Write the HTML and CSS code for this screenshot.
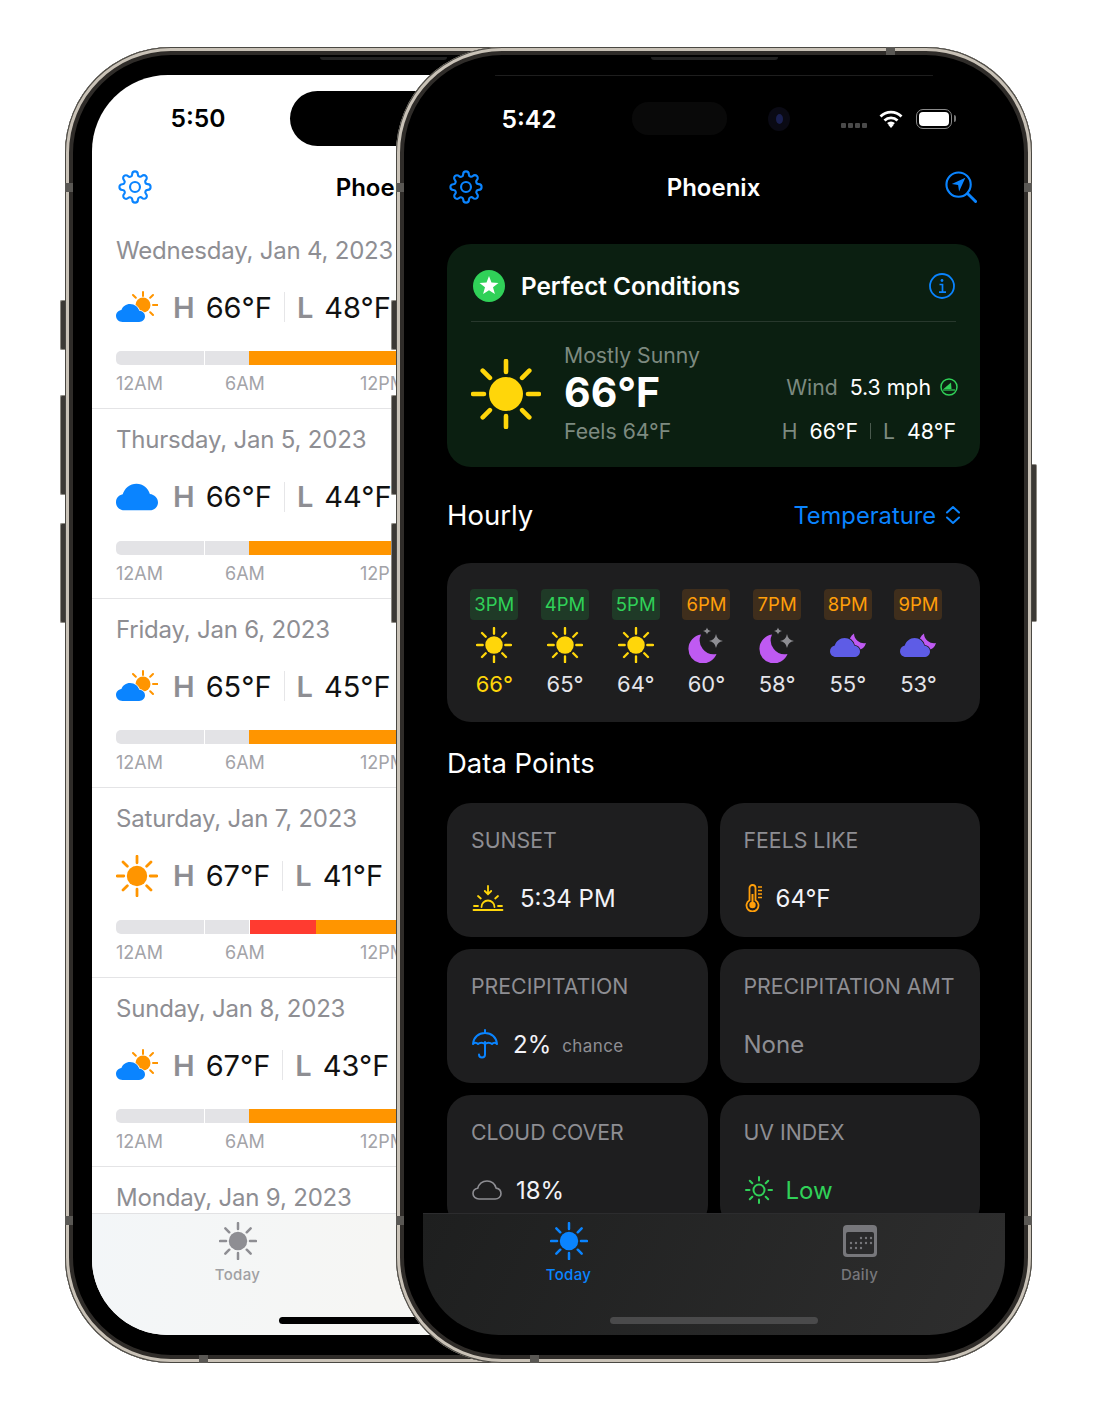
FILE: index.html
```html
<!DOCTYPE html>
<html lang="en">
<head>
    <meta charset="UTF-8">
    <meta name="viewport" content="width=device-width, initial-scale=1.0">
    <title>Phoenix weather</title>
    <link rel="stylesheet" href="styles.css">
</head>
<body>

    <!-- Icon set -->
    <svg class="sprite" xmlns="http://www.w3.org/2000/svg">
        <symbol id="sun" viewBox="0 0 70 70">
            <circle cx="35" cy="35" r="17" fill="currentColor"/>
            <path d="M35 2v11M35 57v11M2 35h11M57 35h11M11.700 11.700l7.200 7.200M51.100 51.100l7.200 7.200M11.700 58.300l7.200-7.200M51.100 18.900l7.200-7.200" stroke="currentColor" stroke-width="4.600" stroke-linecap="round" fill="none"/>
        </symbol>
        <symbol id="gear" viewBox="0 0 24 24">
            <g fill="none" stroke="currentColor" stroke-width="1.500" stroke-linejoin="round">
                <circle cx="12" cy="12" r="3.500"/>
                <path d="M19.400 15a1.650 1.650 0 0 0 .33 1.820l.06.06a2 2 0 0 1 0 2.830 2 2 0 0 1-2.830 0l-.06-.06a1.650 1.650 0 0 0-1.820-.33 1.650 1.650 0 0 0-1 1.510V21a2 2 0 0 1-2 2 2 2 0 0 1-2-2v-.09A1.650 1.650 0 0 0 9 19.400a1.650 1.650 0 0 0-1.820.33l-.06.06a2 2 0 0 1-2.830 0 2 2 0 0 1 0-2.830l.06-.06a1.650 1.650 0 0 0 .33-1.820 1.650 1.650 0 0 0-1.510-1H3a2 2 0 0 1-2-2 2 2 0 0 1 2-2h.09A1.650 1.650 0 0 0 4.600 9a1.650 1.650 0 0 0-.33-1.820l-.06-.06a2 2 0 0 1 0-2.830 2 2 0 0 1 2.830 0l.06.06a1.650 1.650 0 0 0 1.820.33H9a1.650 1.650 0 0 0 1-1.510V3a2 2 0 0 1 2-2 2 2 0 0 1 2 2v.09a1.650 1.650 0 0 0 1 1.510 1.650 1.650 0 0 0 1.820-.33l.06-.06a2 2 0 0 1 2.830 0 2 2 0 0 1 0 2.830l-.06.06a1.650 1.650 0 0 0-.33 1.820V9a1.650 1.650 0 0 0 1.510 1H21a2 2 0 0 1 2 2 2 2 0 0 1-2 2h-.09a1.650 1.650 0 0 0-1.510 1z"/>
            </g>
        </symbol>
        <symbol id="locate" viewBox="0 0 34 34">
            <circle cx="14" cy="14" r="12.500" fill="none" stroke="currentColor" stroke-width="2.200"/>
            <path d="M23.500 23.500L31.500 31.500" stroke="currentColor" stroke-width="3" stroke-linecap="round"/>
            <path d="M21 7L7 13.500l6.500 1 1 6.500z" fill="currentColor"/>
        </symbol>
        <symbol id="cloud-sun" viewBox="0 0 42 32">
            <path d="M27 1v4M17 4l2.800 2.800M37 4l-2.800 2.800M37 14h4.500M37 24l-2.800-2.800" stroke="#ff9500" stroke-width="2" stroke-linecap="round"/>
            <circle cx="27" cy="14" r="7.500" fill="#ff9500"/>
            <path d="M6.500 31C2.900 31 0 28.200 0 24.800c0-3 2.300-5.500 5.400-5.900C6.700 15.500 10 13 14 13c4.700 0 8.300 3 9.300 6.800 3.200.2 5.700 2.400 5.700 5.500 0 3.200-2.600 5.700-5.900 5.700z" fill="#0a84ff" stroke="#fff" stroke-width="1.500" paint-order="stroke"/>
        </symbol>
        <symbol id="cloud" viewBox="0 0 30 19">
            <path d="M6 19C2.700 19 0 16.500 0 13.200c0-2.800 2-5 4.800-5.600C6 3.200 10 0 14.600 0c4.800 0 8.400 3.200 9.600 7.400 3.200.4 5.800 2.800 5.800 6 0 3.200-2.600 5.600-6 5.600z" fill="currentColor"/>
        </symbol>
        <symbol id="moon-stars" viewBox="0 0 36 36">
            <path d="M13 7.500A14.500 14.500 0 1 0 28.500 27A14 14 0 0 1 13 7.500z" fill="#bf5af2"/>
            <path d="M28 7q1 6 7 7-6 1-7 7-1-6-7-7 6-1 7-7zM19 .500q.6 3 4 3.500-3.400.5-4 3.500-.6-3-4-3.500 3.400-.5 4-3.500z" fill="#8e8e93"/>
        </symbol>
        <symbol id="moon-cloud" viewBox="0 0 36 36">
            <path d="M24 6.500a10 10 0 0 0 12 9.500a9.500 9.500 0 0 1-8 7a9 9 0 0 1-4-16.500z" fill="#bf5af2"/>
            <path d="M6 30C2.700 30 0 27.500 0 24.200c0-2.800 2-5 4.800-5.600C6 14.200 10 11 14.600 11c4.800 0 8.400 3.200 9.600 7.400 3.200.4 5.800 2.800 5.800 6 0 3.200-2.600 5.600-6 5.600z" fill="#5e5ce6" stroke="#1e1e1f" stroke-width="1.500" paint-order="stroke"/>
        </symbol>
        <symbol id="sunset" viewBox="0 0 32 26">
            <g fill="none" stroke="currentColor" stroke-width="1.800" stroke-linecap="round">
                <path d="M16 1v8M12.800 6l3.200 3.200L19.200 6M9.500 22a6.500 6.500 0 0 1 13 0M1.500 25h29M2 21h4M26 21h4M6 11l2.800 2.500M26 11l-2.800 2.500"/>
            </g>
        </symbol>
        <symbol id="thermo" viewBox="0 0 18 28">
            <path d="M4.500 4a3 3 0 0 1 6 0v12.300a6 6 0 1 1-6 0z" fill="none" stroke="currentColor" stroke-width="1.800"/>
            <circle cx="7.500" cy="21" r="3.200" fill="currentColor"/>
            <path d="M7.500 10v10" stroke="currentColor" stroke-width="2"/>
            <path d="M13 3h4M13 6.500h4M13 10h4M13 13.500h4" stroke="currentColor" stroke-width="1.400"/>
        </symbol>
        <symbol id="umbrella" viewBox="0 0 26 30">
            <g fill="none" stroke="currentColor" stroke-width="2" stroke-linecap="round" stroke-linejoin="round">
                <path d="M13 1v3M1 15C1.500 8.500 6.500 4 13 4s11.500 4.500 12 11c-1.500-1.800-3.500-1.800-5 0-1.800-1.800-5-1.800-7 0-2-1.800-5.200-1.800-7 0-1.500-1.800-3.500-1.800-5 0z"/>
                <path d="M13 13v12.500a3 3 0 0 1-6 0"/>
            </g>
        </symbol>
        <symbol id="cloud-line" viewBox="0 0 30 20">
            <path d="M7 19C3.600 19 1 16.600 1 13.600c0-2.700 2-4.900 4.700-5.300C7 4 10.600 1 15 1c4.600 0 8 3 9.100 7.100 2.800.5 4.900 2.800 4.900 5.600 0 3-2.600 5.300-5.800 5.300z" fill="none" stroke="currentColor" stroke-width="1.600"/>
        </symbol>
        <symbol id="sun-line" viewBox="0 0 28 28">
            <circle cx="14" cy="14" r="5.500" fill="none" stroke="currentColor" stroke-width="2"/>
            <path d="M14 1v3.500M14 23.500V27M1 14h3.500M23.500 14H27M4.800 4.800l2.500 2.500M20.700 20.700l2.500 2.500M4.800 23.200l2.500-2.500M20.700 7.300l2.500-2.500" stroke="currentColor" stroke-width="2" stroke-linecap="round"/>
        </symbol>
        <symbol id="calendar" viewBox="0 0 34 32">
            <rect x="0" y="0" width="34" height="32" rx="4" fill="currentColor"/>
            <rect x="3" y="7" width="28" height="22" rx="2" fill="#2a2a2b"/>
            <g fill="currentColor">
                <circle cx="18" cy="13" r="1.200"/><circle cx="23" cy="13" r="1.200"/><circle cx="28" cy="13" r="1.200"/>
                <circle cx="8" cy="18" r="1.200"/><circle cx="13" cy="18" r="1.200"/><circle cx="18" cy="18" r="1.200"/><circle cx="23" cy="18" r="1.200"/><circle cx="28" cy="18" r="1.200"/>
                <circle cx="8" cy="23" r="1.200"/><circle cx="13" cy="23" r="1.200"/><circle cx="18" cy="23" r="1.200"/>
            </g>
        </symbol>
    </svg>

    <div class="stage">

        <!-- Light phone, behind -->
        <div class="phone phone-back">
            <span class="side-btn btn-mute"></span>
            <span class="side-btn btn-up"></span>
            <span class="side-btn btn-down"></span>
            <span class="speaker"></span>
            <span class="band band-left"></span>
            <span class="band band-left-low"></span>
            <span class="band band-bottom"></span>

            <div class="screen screen-light">
                <div class="status">
                    <span class="time">5:50</span>
                    <span class="island island-back"></span>
                </div>

                <div class="nav">
                    <svg class="gear"><use href="#gear"/></svg>
                    <span class="title">Phoenix</span>
                    <svg class="locate"><use href="#locate"/></svg>
                </div>

                <div class="day-list">
                    <div class="day">
                        <div class="day-date">Wednesday, Jan 4, 2023</div>
                        <div class="day-temps">
                            <svg class="day-icon"><use href="#cloud-sun"/></svg>
                            <span class="hl">H</span><span class="deg">66°F</span>
                            <span class="sep"></span>
                            <span class="hl">L</span><span class="deg">48°F</span>
                        </div>
                        <div class="bar"><span class="seg-a"></span><span class="seg-b"></span><span class="seg-warm"></span></div>
                        <div class="bar-labels"><span>12AM</span><span>6AM</span><span>12PM</span></div>
                    </div>
                    <div class="day">
                        <div class="day-date">Thursday, Jan 5, 2023</div>
                        <div class="day-temps">
                            <svg class="day-icon day-cloud"><use href="#cloud"/></svg>
                            <span class="hl">H</span><span class="deg">66°F</span>
                            <span class="sep"></span>
                            <span class="hl">L</span><span class="deg">44°F</span>
                        </div>
                        <div class="bar"><span class="seg-a"></span><span class="seg-b"></span><span class="seg-warm"></span></div>
                        <div class="bar-labels"><span>12AM</span><span>6AM</span><span>12PM</span></div>
                    </div>
                    <div class="day">
                        <div class="day-date">Friday, Jan 6, 2023</div>
                        <div class="day-temps">
                            <svg class="day-icon"><use href="#cloud-sun"/></svg>
                            <span class="hl">H</span><span class="deg">65°F</span>
                            <span class="sep"></span>
                            <span class="hl">L</span><span class="deg">45°F</span>
                        </div>
                        <div class="bar"><span class="seg-a"></span><span class="seg-b"></span><span class="seg-warm"></span></div>
                        <div class="bar-labels"><span>12AM</span><span>6AM</span><span>12PM</span></div>
                    </div>
                    <div class="day">
                        <div class="day-date">Saturday, Jan 7, 2023</div>
                        <div class="day-temps">
                            <svg class="day-icon day-sun"><use href="#sun"/></svg>
                            <span class="hl">H</span><span class="deg">67°F</span>
                            <span class="sep"></span>
                            <span class="hl">L</span><span class="deg">41°F</span>
                        </div>
                        <div class="bar"><span class="seg-a"></span><span class="seg-b"></span><span class="seg-hot"></span><span class="seg-warm"></span></div>
                        <div class="bar-labels"><span>12AM</span><span>6AM</span><span>12PM</span></div>
                    </div>
                    <div class="day">
                        <div class="day-date">Sunday, Jan 8, 2023</div>
                        <div class="day-temps">
                            <svg class="day-icon"><use href="#cloud-sun"/></svg>
                            <span class="hl">H</span><span class="deg">67°F</span>
                            <span class="sep"></span>
                            <span class="hl">L</span><span class="deg">43°F</span>
                        </div>
                        <div class="bar"><span class="seg-a"></span><span class="seg-b"></span><span class="seg-warm"></span></div>
                        <div class="bar-labels"><span>12AM</span><span>6AM</span><span>12PM</span></div>
                    </div>
                    <div class="day">
                        <div class="day-date">Monday, Jan 9, 2023</div>
                    </div>
                </div>

                <div class="tabbar tabbar-light">
                    <div class="tabs">
                        <div class="tab">
                            <svg class="tab-icon"><use href="#sun"/></svg>
                            <span class="tab-label">Today</span>
                        </div>
                        <div class="tab">
                            <svg class="tab-icon tab-cal"><use href="#calendar"/></svg>
                            <span class="tab-label">Daily</span>
                        </div>
                    </div>
                    <div class="home-bar"></div>
                </div>
            </div>
        </div>

        <!-- Dark phone, in front -->
        <div class="phone phone-front">
            <span class="side-btn btn-mute"></span>
            <span class="side-btn btn-up"></span>
            <span class="side-btn btn-down"></span>
            <span class="side-btn btn-power"></span>
            <span class="speaker"></span>
            <span class="band band-left"></span>
            <span class="band band-right"></span>
            <span class="band band-left-low"></span>
            <span class="band band-right-low"></span>
            <span class="band band-top"></span>
            <span class="band band-bottom"></span>

            <div class="screen screen-dark">
                <div class="top-line"></div>
                <div class="status status-dark">
                    <span class="time">5:42</span>
                    <span class="island island-front"></span>
                    <span class="camera"><span class="lens"></span></span>
                    <span class="signal"><i></i><i></i><i></i><i></i></span>
                    <svg class="wifi" viewBox="0 0 24 18">
                        <path d="M1.500 6.500a15 15 0 0 1 21 0M5.500 10.500a9.500 9.500 0 0 1 13 0M9 14a4.500 4.500 0 0 1 6 0" fill="none" stroke="#fff" stroke-width="2.800"/>
                        <path d="M12 18l-2.600-3a3.500 3.500 0 0 1 5.200 0z" fill="#fff"/>
                    </svg>
                    <span class="battery"><span class="battery-fill"></span></span>
                </div>

                <div class="nav">
                    <svg class="gear"><use href="#gear"/></svg>
                    <span class="title">Phoenix</span>
                    <svg class="locate"><use href="#locate"/></svg>
                </div>

                <div class="content">
                    <!-- Current conditions -->
                    <div class="hero">
                        <div class="hero-head">
                            <svg class="star-badge" viewBox="0 0 32 32">
                                <circle cx="16" cy="16" r="16" fill="#30d158"/>
                                <path d="M16 6l2.470 6.600 7.030.3-5.500 4.400 1.900 6.800-5.900-3.900-5.900 3.900 1.900-6.800-5.500-4.400 7.030-.3z" fill="#fff"/>
                            </svg>
                            <span class="hero-title">Perfect Conditions</span>
                            <svg class="info" viewBox="0 0 26 26">
                                <circle cx="13" cy="13" r="12" fill="none" stroke="currentColor" stroke-width="1.800"/>
                                <circle cx="13" cy="7.500" r="1.400" fill="currentColor"/>
                                <path d="M10.500 11.500H13.500V19M10 19.200h7" fill="none" stroke="currentColor" stroke-width="1.700"/>
                            </svg>
                        </div>
                        <div class="hero-body">
                            <svg class="hero-sun"><use href="#sun"/></svg>
                            <div class="hero-main">
                                <div class="hero-muted">Mostly Sunny</div>
                                <div class="hero-temp">66°F</div>
                                <div class="hero-muted hero-feels">Feels 64°F</div>
                            </div>
                            <div class="hero-side">
                                <div class="side-row">
                                    <span class="hero-muted">Wind</span>
                                    <span class="side-val">5.3 mph</span>
                                    <svg class="wind-dir" viewBox="0 0 18 18">
                                        <circle cx="9" cy="9" r="8" fill="none" stroke="currentColor" stroke-width="1.500"/>
                                        <path d="M3.500 11L11 4.500l.5 6.500z" fill="currentColor"/>
                                        <path d="M3 12h12" stroke="currentColor" stroke-width="1.200"/>
                                    </svg>
                                </div>
                                <div class="side-row">
                                    <span class="hero-muted">H</span>
                                    <span class="side-val">66°F</span>
                                    <span class="side-sep"></span>
                                    <span class="hero-muted">L</span>
                                    <span class="side-val">48°F</span>
                                </div>
                            </div>
                        </div>
                    </div>

                    <!-- Hourly -->
                    <div class="section-head hourly-head">
                        <span class="section-title">Hourly</span>
                        <span class="picker">Temperature
                            <svg class="updown" viewBox="0 0 16 20">
                                <path d="M2 7.500L8 2l6 5.500M2 12.500L8 18l6-5.500" fill="none" stroke="currentColor" stroke-width="2" stroke-linecap="round" stroke-linejoin="round"/>
                            </svg>
                        </span>
                    </div>

                    <div class="hourly">
                        <div class="hour"><span class="hour-tag tag-good">3PM</span><svg class="hour-icon hour-sun"><use href="#sun"/></svg><span class="hour-temp now">66°</span></div>
                        <div class="hour"><span class="hour-tag tag-good">4PM</span><svg class="hour-icon hour-sun"><use href="#sun"/></svg><span class="hour-temp">65°</span></div>
                        <div class="hour"><span class="hour-tag tag-good">5PM</span><svg class="hour-icon hour-sun"><use href="#sun"/></svg><span class="hour-temp">64°</span></div>
                        <div class="hour"><span class="hour-tag tag-ok">6PM</span><svg class="hour-icon"><use href="#moon-stars"/></svg><span class="hour-temp">60°</span></div>
                        <div class="hour"><span class="hour-tag tag-ok">7PM</span><svg class="hour-icon"><use href="#moon-stars"/></svg><span class="hour-temp">58°</span></div>
                        <div class="hour"><span class="hour-tag tag-ok">8PM</span><svg class="hour-icon"><use href="#moon-cloud"/></svg><span class="hour-temp">55°</span></div>
                        <div class="hour"><span class="hour-tag tag-ok">9PM</span><svg class="hour-icon"><use href="#moon-cloud"/></svg><span class="hour-temp">53°</span></div>
                    </div>

                    <!-- Data points -->
                    <div class="section-head points-head">
                        <span class="section-title">Data Points</span>
                    </div>

                    <div class="points">
                        <div class="point">
                            <div class="point-label">SUNSET</div>
                            <div class="point-value"><svg class="ico-sunset"><use href="#sunset"/></svg>5:34 PM</div>
                        </div>
                        <div class="point">
                            <div class="point-label">FEELS LIKE</div>
                            <div class="point-value"><svg class="ico-thermo"><use href="#thermo"/></svg>64°F</div>
                        </div>
                        <div class="point">
                            <div class="point-label">PRECIPITATION</div>
                            <div class="point-value"><svg class="ico-umbrella"><use href="#umbrella"/></svg>2%<span class="chance">chance</span></div>
                        </div>
                        <div class="point">
                            <div class="point-label">PRECIPITATION AMT</div>
                            <div class="point-value value-none">None</div>
                        </div>
                        <div class="point">
                            <div class="point-label">CLOUD COVER</div>
                            <div class="point-value"><svg class="ico-cloud"><use href="#cloud-line"/></svg>18%</div>
                        </div>
                        <div class="point">
                            <div class="point-label">UV INDEX</div>
                            <div class="point-value value-low"><svg class="ico-uv"><use href="#sun-line"/></svg>Low</div>
                        </div>
                    </div>
                </div>

                <div class="tabbar tabbar-dark">
                    <div class="tabs">
                        <div class="tab tab-active">
                            <svg class="tab-icon"><use href="#sun"/></svg>
                            <span class="tab-label">Today</span>
                        </div>
                        <div class="tab">
                            <svg class="tab-icon tab-cal"><use href="#calendar"/></svg>
                            <span class="tab-label">Daily</span>
                        </div>
                    </div>
                    <div class="home-bar"></div>
                </div>
            </div>
        </div>
    </div>

</body>
</html>
```

FILE: styles.css
```css
* {
    box-sizing: border-box;
}

body {
    margin: 0;
    background: #fff;
    font-family: 'Inter', 'Noto Sans', sans-serif;
}

.sprite {
    display: none;
}

.stage {
    position: relative;
    width: 1098px;
    height: 1411px;
    overflow: hidden;
}

/* Phone body */
.phone {
    position: absolute;
    top: 47px;
    width: 636px;
    height: 1316px;
    padding: 28px 27px;
    background: #000;
    border-radius: 106px;
    box-shadow: inset 0 0 0 1px #4a4843, inset 0 0 0 4px #c9c2b7, inset 0 0 0 8px #2f2c29;
}

.phone-back {
    left: 65px;
}

.phone-front {
    left: 396px;
}

.side-btn {
    position: absolute;
    left: -5px;
    width: 5px;
    background: #3c3935;
    border: 1px solid #8d8a83;
    border-right: 0;
    border-radius: 2px 0 0 2px;
}

.btn-mute {
    top: 253px;
    height: 50px;
}

.btn-up {
    top: 348px;
    height: 100px;
}

.btn-down {
    top: 476px;
    height: 100px;
}

.btn-power {
    left: auto;
    right: -5px;
    top: 417px;
    height: 158px;
    border-right: 1px solid #8d8a83;
    border-left: 0;
    border-radius: 0 2px 2px 0;
}

.speaker {
    position: absolute;
    top: 10px;
    left: 255px;
    width: 127px;
    height: 3px;
    background: #222;
    border-radius: 0 0 4px 4px;
}

.band {
    position: absolute;
    background: #5a5854;
}

.band-left,
.band-left-low {
    left: 0;
    width: 8px;
    height: 9px;
}

.band-right,
.band-right-low {
    right: 0;
    width: 8px;
    height: 9px;
}

.band-left,
.band-right {
    top: 136px;
}

.band-left-low,
.band-right-low {
    top: 1169px;
}

.band-top,
.band-bottom {
    left: 134px;
    width: 9px;
    height: 8px;
}

.band-bottom {
    bottom: 0;
}

.band-top {
    top: 0;
    left: 490px;
}

.screen {
    display: flex;
    flex-direction: column;
    height: 100%;
    border-radius: 76px;
    overflow: hidden;
}

.screen-light {
    background: #fff;
    color: #000;
}

.screen-dark {
    background: #000;
    color: #fff;
}

.top-line {
    height: 1px;
    margin: 0 72px;
    background: #1e1e1e;
}

/* Status bar */
.status {
    display: flex;
    align-items: center;
    flex: none;
    height: 86px;
}

.status-dark {
    height: 85px;
}

.time {
    width: 212px;
    text-align: center;
    font-size: 24.600px;
    font-weight: 600;
}

.island {
    display: block;
    flex: none;
}

.island-back {
    width: 185px;
    height: 55px;
    margin-left: -14px;
    background: #000;
    border-radius: 28px;
}

.island-front {
    width: 95px;
    height: 33px;
    margin-left: -3px;
    background: #090909;
    border-radius: 16px;
}

.camera {
    display: flex;
    align-items: center;
    justify-content: center;
    width: 22px;
    height: 24px;
    margin-left: 41px;
    background: #0a0a14;
    border-radius: 50%;
}

.lens {
    width: 7px;
    height: 10px;
    background: #1a2050;
    border-radius: 50%;
}

.signal {
    display: flex;
    gap: 2px;
    margin: 14px 0 0 51px;
}

.signal i {
    width: 5px;
    height: 5px;
    background: #4a4a4a;
    border-radius: 1px;
}

.wifi {
    width: 24px;
    height: 18px;
    margin-left: 12px;
}

.battery {
    position: relative;
    width: 36px;
    height: 20px;
    margin-left: 13px;
    padding: 2px;
    border: 1.500px solid #8a8a8a;
    border-radius: 7px;
}

.battery::after {
    content: "";
    position: absolute;
    top: 5px;
    right: -5px;
    width: 2px;
    height: 7px;
    background: #777;
    border-radius: 0 2px 2px 0;
}

.battery-fill {
    display: block;
    height: 100%;
    background: #fff;
    border-radius: 4px;
}

/* Nav bar */
.nav {
    display: grid;
    grid-template-columns: 1fr auto 1fr;
    align-items: center;
    flex: none;
    height: 52px;
    padding: 0 27px 0 26px;
}

.gear {
    width: 34px;
    height: 34px;
    color: #0a84ff;
}

.title {
    font-size: 24px;
    font-weight: 600;
}

.locate {
    justify-self: end;
    width: 33px;
    height: 33px;
    color: #0a84ff;
}

/* Daily list */
.day-list {
    flex: 1;
    min-height: 0;
    margin-top: 6.500px;
    overflow: hidden;
}

.day {
    height: 189.500px;
    padding: 12px 24px 0;
    border-bottom: 1px solid #e4e4e6;
}

.day-date {
    font-size: 24px;
    line-height: 37px;
    letter-spacing: -.2px;
    color: #8e8e93;
    white-space: nowrap;
}

.day-temps {
    display: flex;
    align-items: center;
    height: 40px;
    margin-top: 18.500px;
    font-size: 29px;
}

.day-icon {
    width: 42px;
    height: 32px;
    margin-right: 15px;
}

.day-cloud {
    height: 28px;
    color: #0a84ff;
}

.day-sun {
    height: 42px;
    color: #ff9500;
}

.hl {
    margin-right: 11px;
    font-weight: 600;
    color: #8e8e93;
}

.deg {
    color: #111;
}

.sep {
    width: 1px;
    height: 30px;
    margin: 0 12px;
    background: #e6e6e8;
}

.bar {
    display: flex;
    gap: 1px;
    height: 14px;
    margin-top: 24px;
}

.seg-a {
    width: 88px;
    background: #e3e3e6;
    border-radius: 5px 0 0 5px;
}

.seg-b {
    width: 44px;
    background: #e3e3e6;
}

.seg-hot {
    width: 67px;
    margin-right: -1px;
    background: #ff3b30;
}

.seg-warm {
    flex: 1;
    margin-left: -1px;
    background: #ff9500;
}

.bar-labels {
    display: grid;
    grid-template-columns: 109px 135px auto;
    margin-top: 8px;
    font-size: 18px;
    line-height: 22px;
    color: #a3a3a8;
}

/* Dark content */
.content {
    flex: 1;
    min-height: 0;
    padding: 31px 25px 0 24px;
    overflow: hidden;
}

.hero {
    height: 223px;
    padding: 0 24px;
    background: #0b1f11;
    border-radius: 24px;
}

.hero-head {
    display: flex;
    align-items: center;
    height: 78px;
    padding-top: 6px;
    border-bottom: 1px solid #28382d;
}

.star-badge {
    width: 32px;
    height: 32px;
    margin: 0 16px 0 2px;
}

.hero-title {
    font-size: 24.300px;
    font-weight: 600;
}

.info {
    width: 26px;
    height: 26px;
    margin: 0 1px 0 auto;
    color: #0a84ff;
}

.hero-body {
    display: flex;
    align-items: center;
    padding-top: 20px;
}

.hero-sun {
    width: 70px;
    height: 70px;
    margin-right: 23px;
    color: #ffd60a;
}

.hero-muted {
    font-size: 21.200px;
    line-height: 26px;
    color: #7d8a80;
}

.hero-temp {
    font-size: 41px;
    font-weight: 700;
    line-height: 48px;
}

.hero-feels {
    line-height: 30px;
}

.hero-side {
    display: flex;
    flex-direction: column;
    align-items: flex-end;
    gap: 14px;
    margin: 30px 0 0 auto;
}

.side-row {
    display: flex;
    align-items: center;
    gap: 12px;
    height: 30px;
}

.side-val {
    font-size: 21.300px;
}

.side-sep {
    width: 1px;
    height: 16px;
    background: #4a5a4e;
}

.wind-dir {
    width: 18px;
    height: 18px;
    margin: 0 -2px 0 -3px;
    color: #30d158;
}

.section-head {
    display: flex;
    align-items: center;
    justify-content: space-between;
}

.hourly-head {
    height: 96px;
}

.points-head {
    height: 81px;
}

.section-title {
    font-size: 27.500px;
}

.picker {
    display: flex;
    align-items: center;
    gap: 9px;
    margin-right: 19px;
    font-size: 23.700px;
    color: #0a84ff;
}

.updown {
    width: 16px;
    height: 20px;
}

.hourly {
    display: grid;
    grid-template-columns: repeat(7, 70.700px);
    height: 159px;
    padding: 26px 12px 0;
    background: #1e1e1f;
    border-radius: 24px;
}

.hour {
    display: flex;
    flex-direction: column;
    align-items: center;
}

.hour-tag {
    width: 48px;
    height: 31px;
    font-size: 18.500px;
    line-height: 31px;
    text-align: center;
    border-radius: 4px;
}

.tag-good {
    background: #1f3a27;
    color: #30d158;
}

.tag-ok {
    background: #3f2e1c;
    color: #ff9f0a;
}

.hour-icon {
    width: 36px;
    height: 36px;
    margin-top: 7px;
}

.hour-sun {
    color: #ffd60a;
}

.hour-temp {
    margin-top: 6px;
    font-size: 22px;
    line-height: 30px;
    color: #e5e5ea;
}

.hour-temp.now {
    color: #ffd60a;
}

.points {
    display: grid;
    grid-template-columns: repeat(2, minmax(0, 1fr));
    grid-auto-rows: 134px;
    gap: 12px;
}

.point {
    padding: 24px 24px 0;
    background: #1e1e1f;
    border-radius: 24px;
}

.point-label {
    font-size: 21.300px;
    line-height: 26px;
    color: #8e8e93;
    white-space: nowrap;
}

.point-value {
    display: flex;
    align-items: center;
    height: 36px;
    margin-top: 27px;
    font-size: 24px;
    color: #f2f2f7;
}

.value-none {
    color: #8e8e93;
}

.value-low {
    color: #30d158;
}

.chance {
    margin: 3px 0 0 11px;
    font-size: 17px;
    letter-spacing: .4px;
    color: #8e8e93;
}

.ico-sunset {
    width: 32px;
    height: 26px;
    margin: 0 16px 0 1px;
    color: #ffd60a;
}

.ico-thermo {
    width: 18px;
    height: 28px;
    margin: 0 13px 0 1px;
    color: #ff9f0a;
}

.ico-umbrella {
    width: 26px;
    height: 30px;
    margin: 0 15px 0 1px;
    color: #0a84ff;
}

.ico-cloud {
    width: 30px;
    height: 20px;
    margin: 0 14px 0 1px;
    color: #8e8e93;
}

.ico-uv {
    width: 28px;
    height: 28px;
    margin: 0 13px 0 1px;
    color: #30d158;
}

/* Tab bar */
.tabbar {
    display: flex;
    flex-direction: column;
    flex: none;
    height: 122px;
    padding-top: 8px;
}

.tabbar-light {
    background: linear-gradient(100deg, #f3f6f8, #f6f6f4 50%, #f8f6f1);
    border-top: 1px solid #e2e2e4;
    color: #a0a0a3;
}

.tabbar-dark {
    background: linear-gradient(115deg, #1e1f1f, #2e2e2e);
    border-top: 1px solid #2c2c2e;
    color: #77777b;
}

.tabs {
    display: grid;
    grid-template-columns: 1fr 1fr;
}

.tab {
    display: flex;
    flex-direction: column;
    align-items: center;
}

.tab-active {
    color: #0a84ff;
}

.tab-icon {
    width: 38px;
    height: 38px;
}

.tab-cal {
    width: 34px;
    height: 32px;
    margin: 3px 0;
}

.tabbar-light .tab-icon {
    color: #8e8e93;
}

.tab-label {
    margin-top: 5px;
    font-size: 15px;
    font-weight: 500;
    line-height: 20px;
    letter-spacing: .3px;
}

.home-bar {
    width: 208px;
    height: 7px;
    margin: auto auto 11px;
    border-radius: 4px;
}

.tabbar-light .home-bar {
    background: #000;
}

.tabbar-dark .home-bar {
    background: #4a4a4b;
}
```
